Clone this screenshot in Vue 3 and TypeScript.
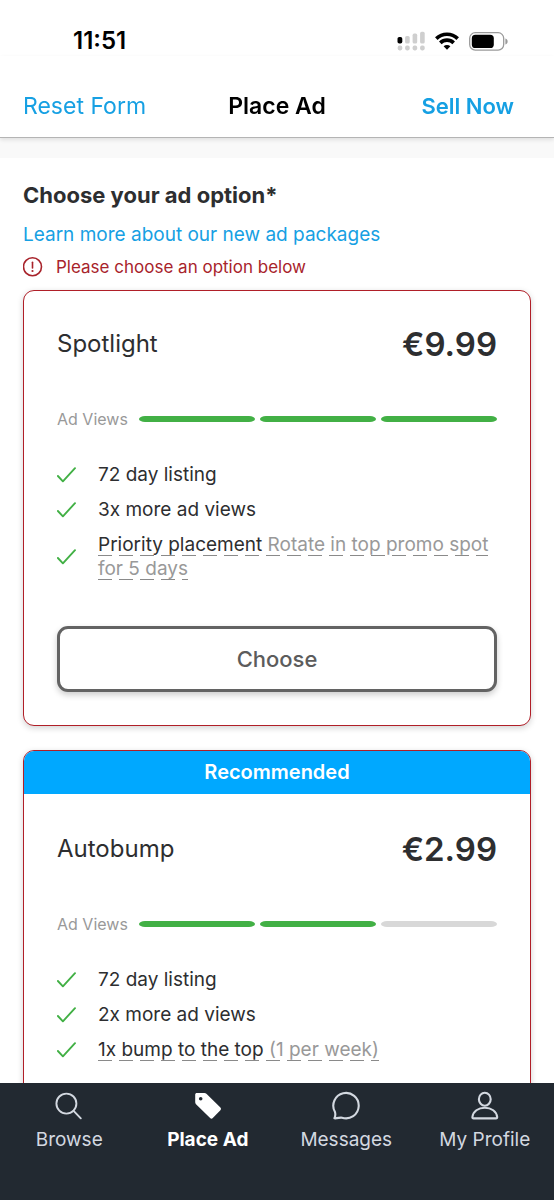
<script setup lang="ts">
interface Feature {
  text: string
  note?: string
}

interface AdPackage {
  name: string
  price: string
  views: number
  recommended: boolean
  action?: string
  features: Feature[]
}

const packages: AdPackage[] = [
  {
    name: 'Spotlight',
    price: '€9.99',
    views: 3,
    recommended: false,
    action: 'Choose',
    features: [
      { text: '72 day listing' },
      { text: '3x more ad views' },
      { text: 'Priority placement', note: 'Rotate in top promo spot for 5 days' },
    ],
  },
  {
    name: 'Autobump',
    price: '€2.99',
    views: 2,
    recommended: true,
    features: [
      { text: '72 day listing' },
      { text: '2x more ad views' },
      { text: '1x bump to the top', note: '(1 per week)' },
    ],
  },
]

const tabs = ['Browse', 'Place Ad', 'Messages', 'My Profile']
const activeTab = 'Place Ad'
</script>

<template>
  <div class="screen">
    <div class="status">
      <span class="time">11:51</span>
      <div class="indicators">
        <svg width="28" height="20" viewBox="0 0 28 20" aria-hidden="true">
          <rect x="0.5" y="6" width="4.8" height="6.6" rx="1.8" fill="#000" />
          <g fill="#cfcfcf">
            <rect x="8.1" y="5" width="4.6" height="7.6" rx="1.6" />
            <rect x="15.6" y="2.6" width="4.6" height="10" rx="1.6" />
            <rect x="23.1" y="0.8" width="4.6" height="11.8" rx="1.6" />
            <rect x="0.7" y="14.6" width="4.6" height="4.8" rx="1.8" />
            <rect x="8.1" y="14.6" width="4.6" height="4.8" rx="1.8" />
            <rect x="15.6" y="14.6" width="4.6" height="4.8" rx="1.8" />
            <rect x="23.1" y="14.6" width="4.6" height="4.8" rx="1.8" />
          </g>
        </svg>
        <svg width="24" height="18" viewBox="0 0 24 18" aria-hidden="true">
          <g fill="none" stroke="#000" stroke-width="3.6">
            <path d="M1.3 6.6a15.2 15.2 0 0 1 21.4 0" />
            <path d="M5.3 10.9a9.5 9.5 0 0 1 13.4 0" />
          </g>
          <path d="M12 17.8l-3.400-3.500a4.800 4.800 0 0 1 6.800 0z" fill="#000" />
        </svg>
        <svg width="39" height="19" viewBox="0 0 39 19" aria-hidden="true">
          <rect x="0.7" y="0.7" width="34" height="17.4" rx="5.6" fill="none" stroke="#9a9a9a" stroke-width="1.3" />
          <rect x="2.8" y="2.8" width="22" height="13.2" rx="3.6" fill="#000" />
          <path d="M36.4 6.4c1.6.6 2.2 1.8 2.2 3s-.6 2.4-2.2 3z" fill="#9a9a9a" />
        </svg>
      </div>
    </div>

    <header class="bar">
      <button type="button" class="bar-action">Reset Form</button>
      <h1>Place Ad</h1>
      <button type="button" class="bar-action strong">Sell Now</button>
    </header>

    <main>
      <section class="options">
        <h2>Choose your ad option*</h2>
        <a class="learn" href="#packages">Learn more about our new ad packages</a>
        <p class="error" role="alert">
          <svg width="20" height="20" viewBox="0 0 20 20" aria-hidden="true">
            <circle cx="9.5" cy="9.800" r="9" fill="none" stroke="#a8232b" stroke-width="1.600" />
            <path d="M9.500 5.200v5.800" stroke="#a8232b" stroke-width="1.600" stroke-linecap="round" />
            <circle cx="9.500" cy="14" r="1.100" fill="#a8232b" />
          </svg>
          <span>Please choose an option below</span>
        </p>

        <article v-for="item in packages" :key="item.name" class="card" :class="{ featured: item.recommended }">
          <div v-if="item.recommended" class="ribbon">Recommended</div>
          <div class="body">
            <div class="head">
              <h3>{{ item.name }}</h3>
              <span class="price">{{ item.price }}</span>
            </div>
            <div class="views">
              <span class="views-label">Ad Views</span>
              <div class="meter">
                <span v-for="n in 3" :key="n" class="segment" :class="{ on: n <= item.views }"></span>
              </div>
            </div>
            <ul>
              <li v-for="feature in item.features" :key="feature.text">
                <svg width="20" height="16" viewBox="0 0 20 16" aria-hidden="true">
                  <path d="M0.9 9l5 5.300L18 1.200" fill="none" stroke="#42b045" stroke-width="1.900" stroke-linecap="round" stroke-linejoin="round" />
                </svg>
                <div>
                  <span v-if="feature.note" class="hint">{{ feature.text }} <span class="note">{{ feature.note }}</span></span>
                  <span v-else>{{ feature.text }}</span>
                </div>
              </li>
            </ul>
            <button v-if="item.action" type="button" class="choose">{{ item.action }}</button>
          </div>
        </article>
      </section>
    </main>

    <nav>
      <a v-for="tab in tabs" :key="tab" href="#" class="tab" :class="{ active: tab === activeTab }">
        <svg width="30" height="30" viewBox="0 0 30 30" aria-hidden="true">
          <g v-if="tab === 'Browse'" fill="none" stroke="currentColor" stroke-width="1.9" stroke-linecap="round">
            <circle cx="12.4" cy="12.6" r="10" />
            <path d="M19.6 19.800l7.200 7.500" />
          </g>
          <path
            v-else-if="tab === 'Place Ad'"
            fill="currentColor"
            fill-rule="evenodd"
            d="M3.800 2h7.600c.8 0 1.500.3 2 .8L27.400 16.600c.8.8.8 1.900 0 2.700l-7.600 7.800c-.8.800-1.900.800-2.700 0L3 13.300c-.5-.5-.8-1.200-.8-2V3.600C2.200 2.700 2.900 2 3.800 2zM7.700 5.900a1.800 1.800 0 1 0 0 3.600 1.800 1.800 0 0 0 0-3.600z"
          />
          <path
            v-else-if="tab === 'Messages'"
            fill="none"
            stroke="currentColor"
            stroke-width="2.1"
            stroke-linejoin="round"
            d="M3.900 20.800A12.700 12.700 0 1 1 11 26.700c-2-.6-4.200.9-7.600.6 1-1.900 1.300-3.800.5-6.500z"
          />
          <g v-else fill="none" stroke="currentColor" stroke-width="2.1" stroke-linejoin="round">
            <ellipse cx="14.8" cy="8.200" rx="5.900" ry="6.500" />
            <path d="M3.600 27.400c-.9 0-1.300-.5-1.200-1.400.7-5.600 5.800-9.300 12.400-9.300s11.700 3.700 12.400 9.300c.1.900-.3 1.400-1.200 1.400z" />
          </g>
        </svg>
        <span>{{ tab }}</span>
      </a>
    </nav>
  </div>
</template>

<style>
body {
  margin: 0;
}
</style>

<style scoped>
.screen {
  display: flex;
  flex-direction: column;
  height: 100vh;
  background: #fff;
  color: #2d2e30;
  font-family: Inter, "Liberation Sans", sans-serif;
}

h1,
h2,
h3,
p,
ul {
  margin: 0;
  padding: 0;
}

button {
  font-family: inherit;
  background: none;
  border: 0;
  padding: 0;
  cursor: pointer;
}

.status {
  display: flex;
  justify-content: space-between;
  align-items: center;
  padding: 26px 46px 0 73px;
}

.time {
  color: #000;
  font-size: 24px;
  line-height: 30px;
  font-weight: 600;
}

.indicators {
  display: flex;
  align-items: center;
  gap: 10px;
}

.bar {
  position: relative;
  z-index: 1;
  display: grid;
  grid-template-columns: 1fr auto 1fr;
  align-items: center;
  padding: 35px 23px 16px;
  background: #fff;
  border-bottom: 1px solid #b4b4b4;
  box-shadow: 0 2px 4px rgba(0, 0, 0, 0.1);
}

.bar-action {
  justify-self: start;
  color: #16a0e3;
  font-size: 23px;
  line-height: 30px;
}

.bar-action.strong {
  justify-self: end;
  margin-right: 17px;
  font-size: 22px;
  font-weight: 600;
}

h1 {
  color: #000;
  font-size: 23px;
  line-height: 30px;
  font-weight: 600;
}

main {
  flex: 1;
  min-height: 0;
  overflow: auto;
  scrollbar-width: none;
  padding-top: 20px;
  background: #f9f9f9;
}

.options {
  padding: 22px 23px 24px;
  background: #fff;
}

h2 {
  font-size: 22px;
  line-height: 30px;
  font-weight: 700;
}

.learn {
  display: block;
  margin-top: 13px;
  color: #16a0e3;
  font-size: 19px;
  line-height: 24px;
  text-decoration: none;
}

.error {
  display: flex;
  align-items: center;
  gap: 13px;
  margin: 10px 0 13px;
  color: #a8232b;
  font-size: 17px;
  line-height: 20px;
}

.card {
  margin-bottom: 24px;
  overflow: hidden;
  border: 1px solid #b01f28;
  border-radius: 11px;
  background: #fff;
  box-shadow: 0 2px 6px rgba(0, 0, 0, 0.18);
}

.ribbon {
  background: #00a8ff;
  color: #fff;
  font-size: 20px;
  line-height: 43px;
  font-weight: 600;
  text-align: center;
}

.body {
  padding: 33px 33px 33px;
}

.featured .body {
  padding-top: 35px;
}

.head {
  display: flex;
  justify-content: space-between;
  align-items: center;
  line-height: 40px;
}

h3 {
  font-size: 24px;
  font-weight: 400;
}

.price {
  font-size: 33px;
  font-weight: 600;
}

.views {
  display: flex;
  align-items: center;
  gap: 11px;
  margin-top: 45px;
}

.views-label {
  color: #999;
  font-size: 16px;
  line-height: 20px;
}

.meter {
  display: flex;
  flex: 1;
  gap: 5px;
}

.segment {
  flex: 1;
  height: 6px;
  border-radius: 6px / 3px;
  background: #d8d8d8;
}

.segment.on {
  background: #42b045;
}

ul {
  display: flex;
  flex-direction: column;
  gap: 11px;
  margin-top: 34px;
  list-style: none;
}

li {
  display: flex;
  align-items: center;
  gap: 21px;
  font-size: 19px;
  line-height: 24px;
}

li svg {
  flex: none;
}

.hint {
  -webkit-box-decoration-break: clone;
  box-decoration-break: clone;
  background: repeating-linear-gradient(90deg, #8a8a8a 0 14px, transparent 14px 21px) left bottom / 100% 1px no-repeat;
}

.note {
  color: #999;
}

.choose {
  display: block;
  width: 100%;
  height: 66px;
  margin-top: 45px;
  border: 3px solid #636363;
  border-radius: 11px;
  background: #fff;
  color: #5c5c5c;
  font-size: 22px;
  font-weight: 500;
  box-shadow: 0 3px 6px rgba(0, 0, 0, 0.2);
}

nav {
  display: grid;
  grid-template-columns: repeat(4, 1fr);
  padding: 8px 0 47px;
  background: #222931;
}

.tab {
  display: flex;
  flex-direction: column;
  align-items: center;
  gap: 6px;
  color: #d3d8e0;
  font-size: 19px;
  line-height: 26px;
  text-decoration: none;
}

.tab.active {
  color: #fff;
  font-weight: 700;
}
</style>
